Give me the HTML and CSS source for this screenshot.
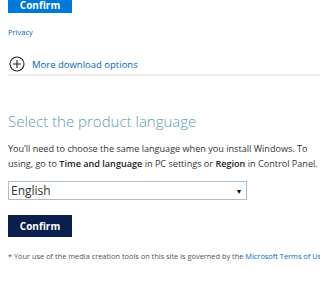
FILE: index.html
```html
<!DOCTYPE html>
<html>
<head>
<meta charset="utf-8">
<link rel="stylesheet" href="styles.css">
</head>
<body>
<div class="page">
  <div class="btn btn-blue">Confirm</div>
  <a class="privacy">Privacy</a>
  <div class="more">
    <svg class="plus" width="16" height="16" viewBox="0 0 16 16"><circle cx="8" cy="8" r="7" fill="none" stroke="#222" stroke-width="1.1"/><path d="M8 4v8M4 8h8" stroke="#222" stroke-width="1.1"/></svg>
    <span class="more-text">More download options</span>
  </div>
  <div class="rule"></div>
  <h2 class="title">Select the product language</h2>
  <p class="desc">You’ll need to choose the same language when you install Windows. To<br>using, go to <b>Time and language</b> in PC settings or <b>Region</b> in Control Panel.</p>
  <div class="select"><span>English</span><span class="arrow">▾</span></div>
  <div class="btn btn-navy">Confirm</div>
  <p class="foot">* Your use of the media creation tools on this site is governed by the <a class="link">Microsoft Terms of Use</a> for this website.</p>
</div>
</body>
</html>
```
FILE: styles.css
```css
html, body { margin: 0; padding: 0; background: #fff; overflow: hidden; }
.page { padding-left: 8px; font-family: "Open Sans", "Noto Sans", sans-serif; color: #333; white-space: nowrap; }
.btn { width: 64px; display: flex; align-items: center; justify-content: center; color: #fff; font-weight: 700; font-size: 10px; }
.btn-blue { background: #0078d7; margin-top: -3px; height: 16px; }
.btn-navy { background: #0b1f4d; margin-top: 15px; height: 22px; }
.privacy { display: block; color: #0067b8; font-size: 7.5px; margin-top: 14px; line-height: 10px; }
.more { display: flex; align-items: center; gap: 7px; margin-top: 19px; height: 16px; }
.plus { margin-left: 1px; }
.more-text { color: #0067b8; font-size: 9.5px; }
.rule { height: 2px; background: #ececec; margin-top: 2px; }
.title { font-weight: 300; font-size: 15px; color: #5b9db1; margin: 35px 0 0; line-height: 20px; }
.desc { font-size: 9.1px; line-height: 15px; margin: 10px 0 0; color: #333; }
.desc b { font-weight: 600; color: #222; }
.select { width: 235px; height: 17px; border: 1px solid #a9bed3; display: flex; align-items: center; justify-content: space-between; font-size: 12px; color: #333; margin-top: 10px; padding: 0 0 0 2px; box-sizing: content-box; }
.arrow { font-size: 8px; color: #000; margin-right: 5px; }
.foot { font-size: 7.4px; color: #505050; margin: 14px 0 0; }
.link { color: #0067b8; }
```
